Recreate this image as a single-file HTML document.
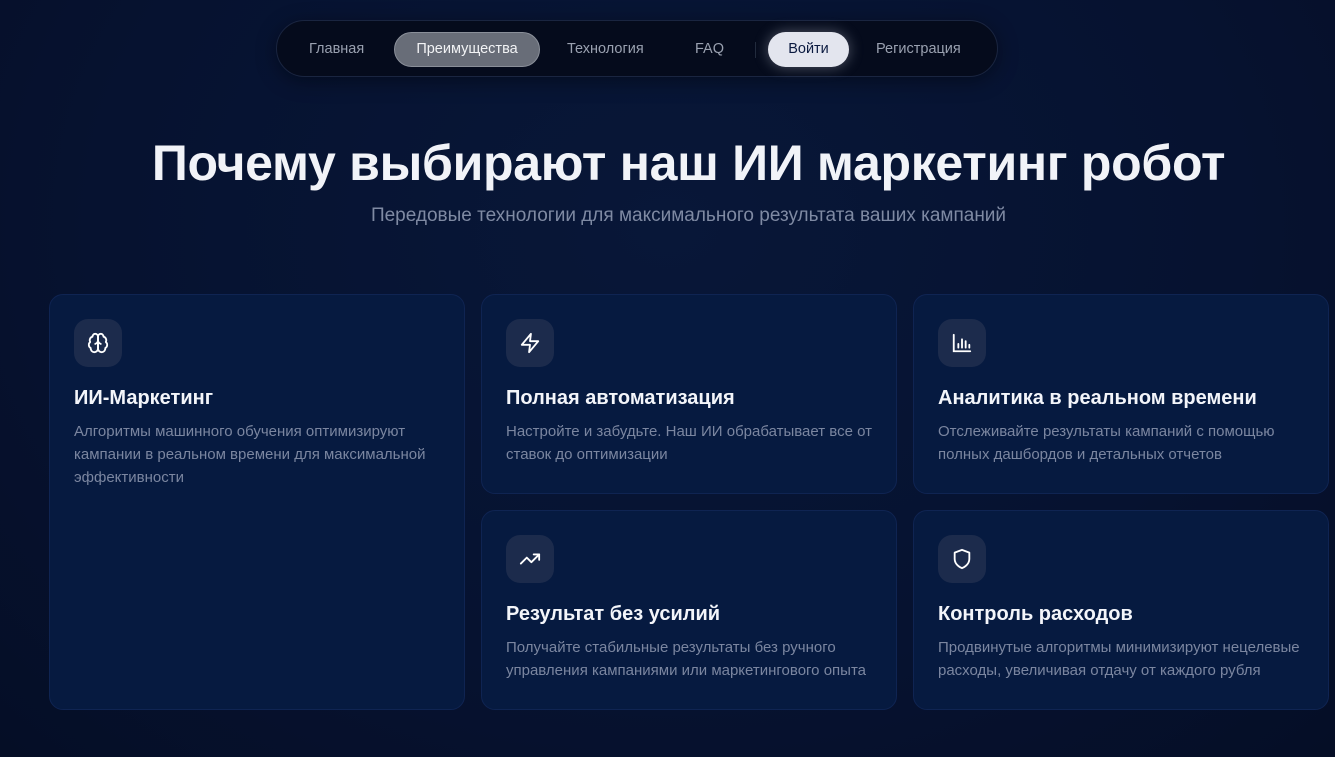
<!DOCTYPE html>
<html><head><meta charset="utf-8"><style>
*{margin:0;padding:0;box-sizing:border-box}
body{width:1335px;height:757px;overflow:hidden;background:radial-gradient(ellipse at 50% 30%,#081738 0%,#061230 60%,#050e26 100%);font-family:"Liberation Sans","DejaVu Sans",sans-serif;position:relative}
.nav{position:absolute;left:276px;top:20px;width:722px;height:57px;border-radius:29px;background:#050b1c;border:1px solid #1a2540;box-shadow:0 4px 20px rgba(0,0,0,.4)}
.nav span{position:absolute;top:0;height:57px;line-height:57px;font-size:14.5px;color:#9aa1b0}
.nav .pill{top:11px;height:35px;border-radius:18px;line-height:33px;text-align:center}
h1{position:absolute;top:134px;left:21px;width:1335px;text-align:center;color:#f1f3f8;font-size:50px;font-weight:bold;letter-spacing:-0.3px}
.sub{position:absolute;top:205px;left:21px;width:1335px;text-align:center;color:#7f8aa3;font-size:19px}
.card{position:absolute;width:416px;background:#061a40;border:1px solid #0f2452;border-radius:14px}
.ic{position:absolute;left:24px;top:24px;width:48px;height:48px;border-radius:14px;background:#1c2b4c;display:flex;align-items:center;justify-content:center}
.t{position:absolute;left:24px;top:92px;color:#f3f5fa;font-size:20px;font-weight:bold;white-space:nowrap}
.d{position:absolute;left:24px;top:125px;width:380px;color:#7b86a0;font-size:15px;line-height:23px}
</style></head><body>
<div class="nav">
<span style="left:32px">Главная</span>
<span class="pill" style="left:117px;width:146px;background:#686d78;border:1px solid #8a8f99;color:#f2f3f5">Преимущества</span>
<span style="left:290px">Технология</span>
<span style="left:418px">FAQ</span>
<div style="position:absolute;left:478px;top:21px;width:1px;height:16px;background:#222b3d"></div>
<span class="pill" style="left:491px;width:81px;background:#e3e5ee;color:#0b1a40;box-shadow:0 0 14px rgba(220,225,240,.35);line-height:35px">Войти</span>
<span style="left:599px">Регистрация</span>
</div>
<h1>Почему выбирают наш ИИ маркетинг робот</h1>
<div class="sub">Передовые технологии для максимального результата ваших кампаний</div>

<div class="card" style="left:49px;top:294px;height:416px">
<div class="ic"><svg width="22" height="22" viewBox="0 0 24 24" fill="none" stroke="#fff" stroke-width="2" stroke-linecap="round" stroke-linejoin="round"><path d="M12 5a3 3 0 1 0-5.997.125 4 4 0 0 0-2.526 5.77 4 4 0 0 0 .556 6.588A4 4 0 1 0 12 18Z"/><path d="M12 5a3 3 0 1 1 5.997.125 4 4 0 0 1 2.526 5.77 4 4 0 0 1-.556 6.588A4 4 0 1 1 12 18Z"/><path d="M15 13a4.5 4.5 0 0 1-3-4 4.5 4.5 0 0 1-3 4"/><path d="M12 18V5"/></svg></div>
<div class="t">ИИ-Маркетинг</div>
<div class="d">Алгоритмы машинного обучения оптимизируют кампании в реальном времени для максимальной эффективности</div></div>

<div class="card" style="left:481px;top:294px;height:200px">
<div class="ic"><svg width="22" height="22" viewBox="0 0 24 24" fill="none" stroke="#fff" stroke-width="2" stroke-linejoin="round"><path d="M13 2 3 14h9l-1 8 10-12h-9l1-8z"/></svg></div>
<div class="t">Полная автоматизация</div>
<div class="d">Настройте и забудьте. Наш ИИ обрабатывает все от ставок до оптимизации</div></div>

<div class="card" style="left:913px;top:294px;height:200px">
<div class="ic"><svg width="22" height="22" viewBox="0 0 24 24" fill="none" stroke="#fff" stroke-width="2" stroke-linecap="round"><path d="M3 3v18h18"/><path d="M8 17v-4M12 17V8M16 17v-7M20 17v-3"/></svg></div>
<div class="t">Аналитика в реальном времени</div>
<div class="d">Отслеживайте результаты кампаний с помощью полных дашбордов и детальных отчетов</div></div>

<div class="card" style="left:481px;top:510px;height:200px">
<div class="ic"><svg width="22" height="22" viewBox="0 0 24 24" fill="none" stroke="#fff" stroke-width="2" stroke-linecap="round" stroke-linejoin="round"><path d="m22 7-8.5 8.5-5-5L2 17"/><path d="M16 7h6v6"/></svg></div>
<div class="t">Результат без усилий</div>
<div class="d">Получайте стабильные результаты без ручного управления кампаниями или маркетингового опыта</div></div>

<div class="card" style="left:913px;top:510px;height:200px">
<div class="ic"><svg width="22" height="22" viewBox="0 0 24 24" fill="none" stroke="#fff" stroke-width="2" stroke-linejoin="round"><path d="M12 22s8-3 8-10V5l-8-3-8 3v7c0 7 8 10 8 10z"/></svg></div>
<div class="t">Контроль расходов</div>
<div class="d">Продвинутые алгоритмы минимизируют нецелевые расходы, увеличивая отдачу от каждого рубля</div></div>
</body></html>
